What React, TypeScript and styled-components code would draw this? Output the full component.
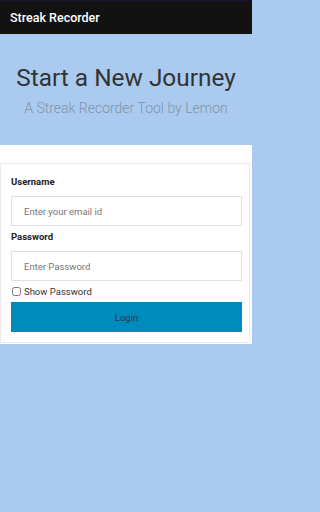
import * as React from "react";
import styled, { createGlobalStyle } from "styled-components";

const GlobalStyle = createGlobalStyle`
  html, body {
    margin: 0;
    padding: 0;
    background: #aacbef;
    font-family: Roboto, "Liberation Sans", Arial, sans-serif;
  }
  * {
    box-sizing: border-box;
  }
`;

const Page = styled("div")`
  width: 252px;
  min-height: 512px;
  background: #aacbef;
`;

const AppBar = styled("header")`
  height: 34px;
  background: #121212;
  border-top: 1px solid #1b1430;
  display: flex;
  align-items: center;
  padding-left: 10px;
  color: #ffffff;
  font-size: 12.5px;
  font-weight: 500;
`;

const Hero = styled("section")`
  padding: 30px 0 28px;
  text-align: center;
`;

const Heading = styled("h1")`
  margin: 0;
  font-size: 24.4px;
  line-height: 28px;
  font-weight: 400;
  color: #333333;
`;

const Subtitle = styled("p")`
  margin: 8px 0 0;
  font-size: 14px;
  line-height: 17px;
  font-weight: 300;
  color: #8292a6;
`;

const FormSection = styled("section")`
  background: #ffffff;
  padding: 18px 2px 1px 0;
`;

const Card = styled("form")`
  border: 1px solid #ebebeb;
  padding: 12px 7px 10px 10px;
  display: flex;
  flex-direction: column;
`;

const Label = styled("label")`
  display: block;
  font-size: 9.5px;
  line-height: 12px;
  font-weight: 700;
  color: #222222;
  margin-bottom: 8px;
`;

const Input = styled("input")<{ $gap?: number }>`
  display: block;
  width: 100%;
  height: 30px;
  border: 1px solid #e0e0e0;
  border-radius: 0;
  padding: 0 12px;
  margin: 0 0 ${(p) => p.$gap ?? 0}px;
  font-family: inherit;
  font-size: 9.5px;
  color: #333333;
  background: #ffffff;
  outline: none;

  &::placeholder {
    color: #777777;
  }
`;

const CheckRow = styled("label")`
  display: flex;
  align-items: center;
  height: 18px;
  margin-top: 1px;
  font-size: 9.5px;
  color: #333333;
`;

const Checkbox = styled("input")`
  width: 9px;
  height: 9px;
  margin: 0 3px 0 1px;
  accent-color: #777777;
`;

const LoginButton = styled("button")`
  margin-top: 2px;
  height: 30px;
  width: 100%;
  border: none;
  background: #008bbd;
  color: #2b3b44;
  font-family: inherit;
  font-size: 9.5px;
  cursor: pointer;
`;

function App(): JSX.Element {
  const [showPassword, setShowPassword] = React.useState(false);

  return (
    <Page>
      <GlobalStyle />
      <AppBar>Streak Recorder</AppBar>
      <Hero>
        <Heading>Start a New Journey</Heading>
        <Subtitle>A Streak Recorder Tool by Lemon</Subtitle>
      </Hero>
      <FormSection>
        <Card onSubmit={(e) => e.preventDefault()}>
          <Label htmlFor="username">Username</Label>
          <Input id="username" placeholder="Enter your email id" $gap={5} />
          <Label htmlFor="password">Password</Label>
          <Input
            id="password"
            type={showPassword ? "text" : "password"}
            placeholder="Enter Password"
          />
          <CheckRow>
            <Checkbox
              type="checkbox"
              checked={showPassword}
              onChange={() => setShowPassword(!showPassword)}
            />
            Show Password
          </CheckRow>
          <LoginButton type="submit">Login</LoginButton>
        </Card>
      </FormSection>
    </Page>
  );
}

export default App;
